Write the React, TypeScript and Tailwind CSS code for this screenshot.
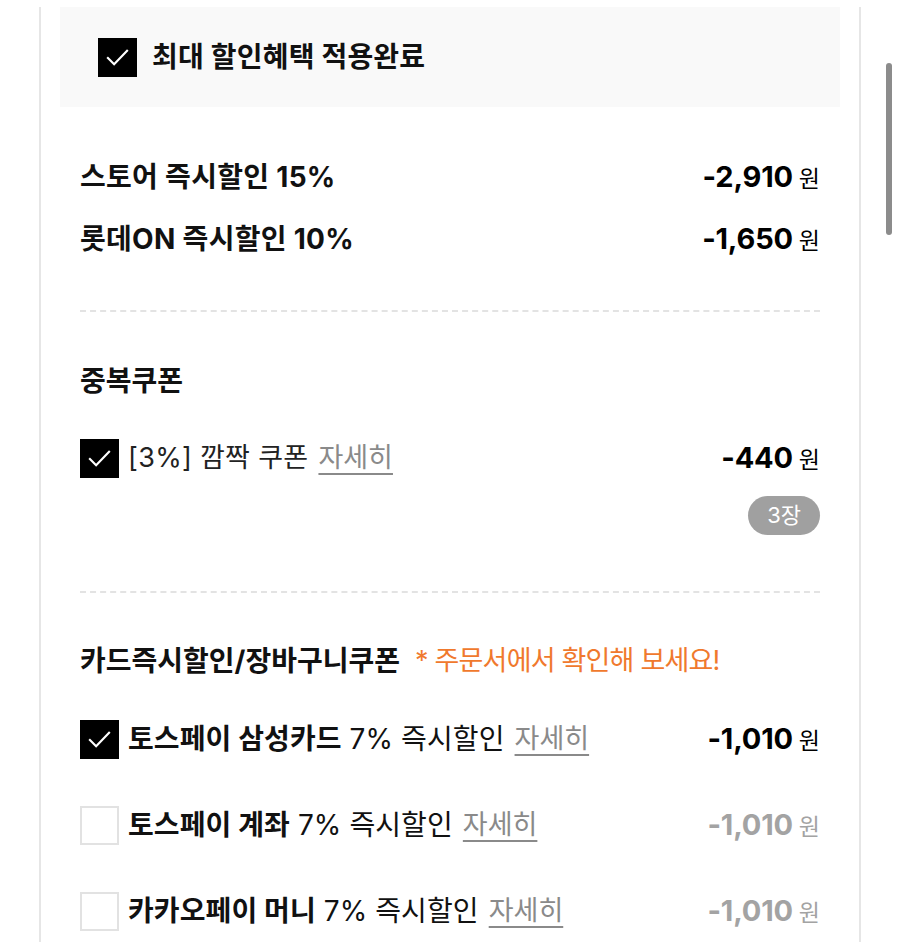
import React from "react";

type CardRow = {
    name: string;
    checked: boolean;
};

const cardRows: CardRow[] = [
    { name: "토스페이 삼성카드", checked: true },
    { name: "토스페이 계좌", checked: false },
    { name: "카카오페이 머니", checked: false },
];

function CheckBox({ checked, className = "" }: { checked: boolean; className?: string }) {
    if (!checked) {
        return <div className={"w-[39px] h-[39px] shrink-0 border-2 border-[#e2e2e2] bg-white " + className} />;
    }
    return (
        <div className={"w-[39px] h-[39px] shrink-0 bg-black flex items-center justify-center " + className}>
            <svg width="27" height="27" viewBox="0 0 24 24" fill="none">
                <path d="M3.5 12.5l5.5 5.5L20.5 6" stroke="#fff" strokeWidth="1.9" strokeLinecap="square" />
            </svg>
        </div>
    );
}

function Price({ value, muted = false }: { value: string; muted?: boolean }) {
    return (
        <div className={"flex items-baseline gap-[6px] shrink-0 " + (muted ? "text-[#a3a3a3]" : "text-black")}>
            <span className="text-[29px] font-bold tracking-[-0.2px]">{value}</span>
            <span className="text-[23px]">원</span>
        </div>
    );
}

function Detail() {
    return (
        <span className="ml-[10px] text-[27px] text-[#8a8a8a] underline underline-offset-[6px] decoration-[1.5px]">
            자세히
        </span>
    );
}

export default function App() {
    return (
        <div
            className="relative w-[900px] h-[942px] bg-white overflow-hidden"
            style={{ fontFamily: 'Inter, "Noto Sans CJK KR", "Noto Sans", sans-serif' }}
        >
            <div className="mx-[39px] h-full border-x-2 border-[#e6e6e6] px-[19px]">
                {/* applied banner */}
                <div className="mt-[7px] h-[100px] bg-[#f9f9f9] flex items-center pl-[38px] gap-[15px]">
                    <CheckBox checked />
                    <span className="text-[28px] font-bold tracking-[0.2px] text-[#111]">최대 할인혜택 적용완료</span>
                </div>

                <div className="px-[20px]">
                    {/* instant discounts */}
                    <div className="mt-[50px] h-[40px] flex items-center justify-between">
                        <span className="text-[28px] font-bold tracking-[0.3px] text-[#111]">스토어 즉시할인 15%</span>
                        <Price value="-2,910" />
                    </div>
                    <div className="mt-[22px] h-[40px] flex items-center justify-between">
                        <span className="text-[28px] font-bold tracking-[0.3px] text-[#111]">롯데ON 즉시할인 10%</span>
                        <Price value="-1,650" />
                    </div>

                    <div className="mt-[51px] border-t-2 border-dashed border-[#e3e3e3]" />

                    {/* duplicate coupon */}
                    <div className="mt-[49px] h-[40px] flex items-center">
                        <span className="text-[28px] font-bold text-[#111]">중복쿠폰</span>
                    </div>
                    <div className="mt-[37px] h-[40px] flex items-center justify-between">
                        <div className="flex items-center">
                            <CheckBox checked />
                            <span className="ml-[9px] text-[27px] tracking-[0.3px] text-[#222]">[3%] 깜짝 쿠폰</span>
                            <Detail />
                        </div>
                        <Price value="-440" />
                    </div>
                    <div className="mt-[18px] flex justify-end">
                        <span className="h-[39px] px-[19px] rounded-full bg-[#a0a0a0] text-white text-[22px] flex items-center">3장</span>
                    </div>

                    <div className="mt-[56px] border-t-2 border-dashed border-[#e3e3e3]" />

                    {/* card discounts */}
                    <div className="mt-[48px] h-[40px] flex items-center gap-[15px]">
                        <span className="text-[28px] font-bold text-[#111]">카드즉시할인/장바구니쿠폰</span>
                        <span className="text-[27px] tracking-[-0.8px] text-[#f0792d]">* 주문서에서 확인해 보세요!</span>
                    </div>

                    <div className="mt-[38px] flex flex-col gap-[46px]">
                        {cardRows.map((row) => (
                            <div key={row.name} className="h-[40px] flex items-center justify-between">
                                <div className="flex items-center">
                                    <CheckBox checked={row.checked} />
                                    <span className="ml-[9px] text-[28px] tracking-[0.1px] text-[#111]">
                                        <b className="font-bold">{row.name}</b> 7% 즉시할인
                                    </span>
                                    <Detail />
                                </div>
                                <Price value="-1,010" muted={!row.checked} />
                            </div>
                        ))}
                    </div>
                </div>
            </div>

            {/* scrollbar overlay */}
            <div className="absolute left-[886px] top-[63px] w-[6px] h-[172px] rounded-full bg-[#8c8c8c]" />
        </div>
    );
}
